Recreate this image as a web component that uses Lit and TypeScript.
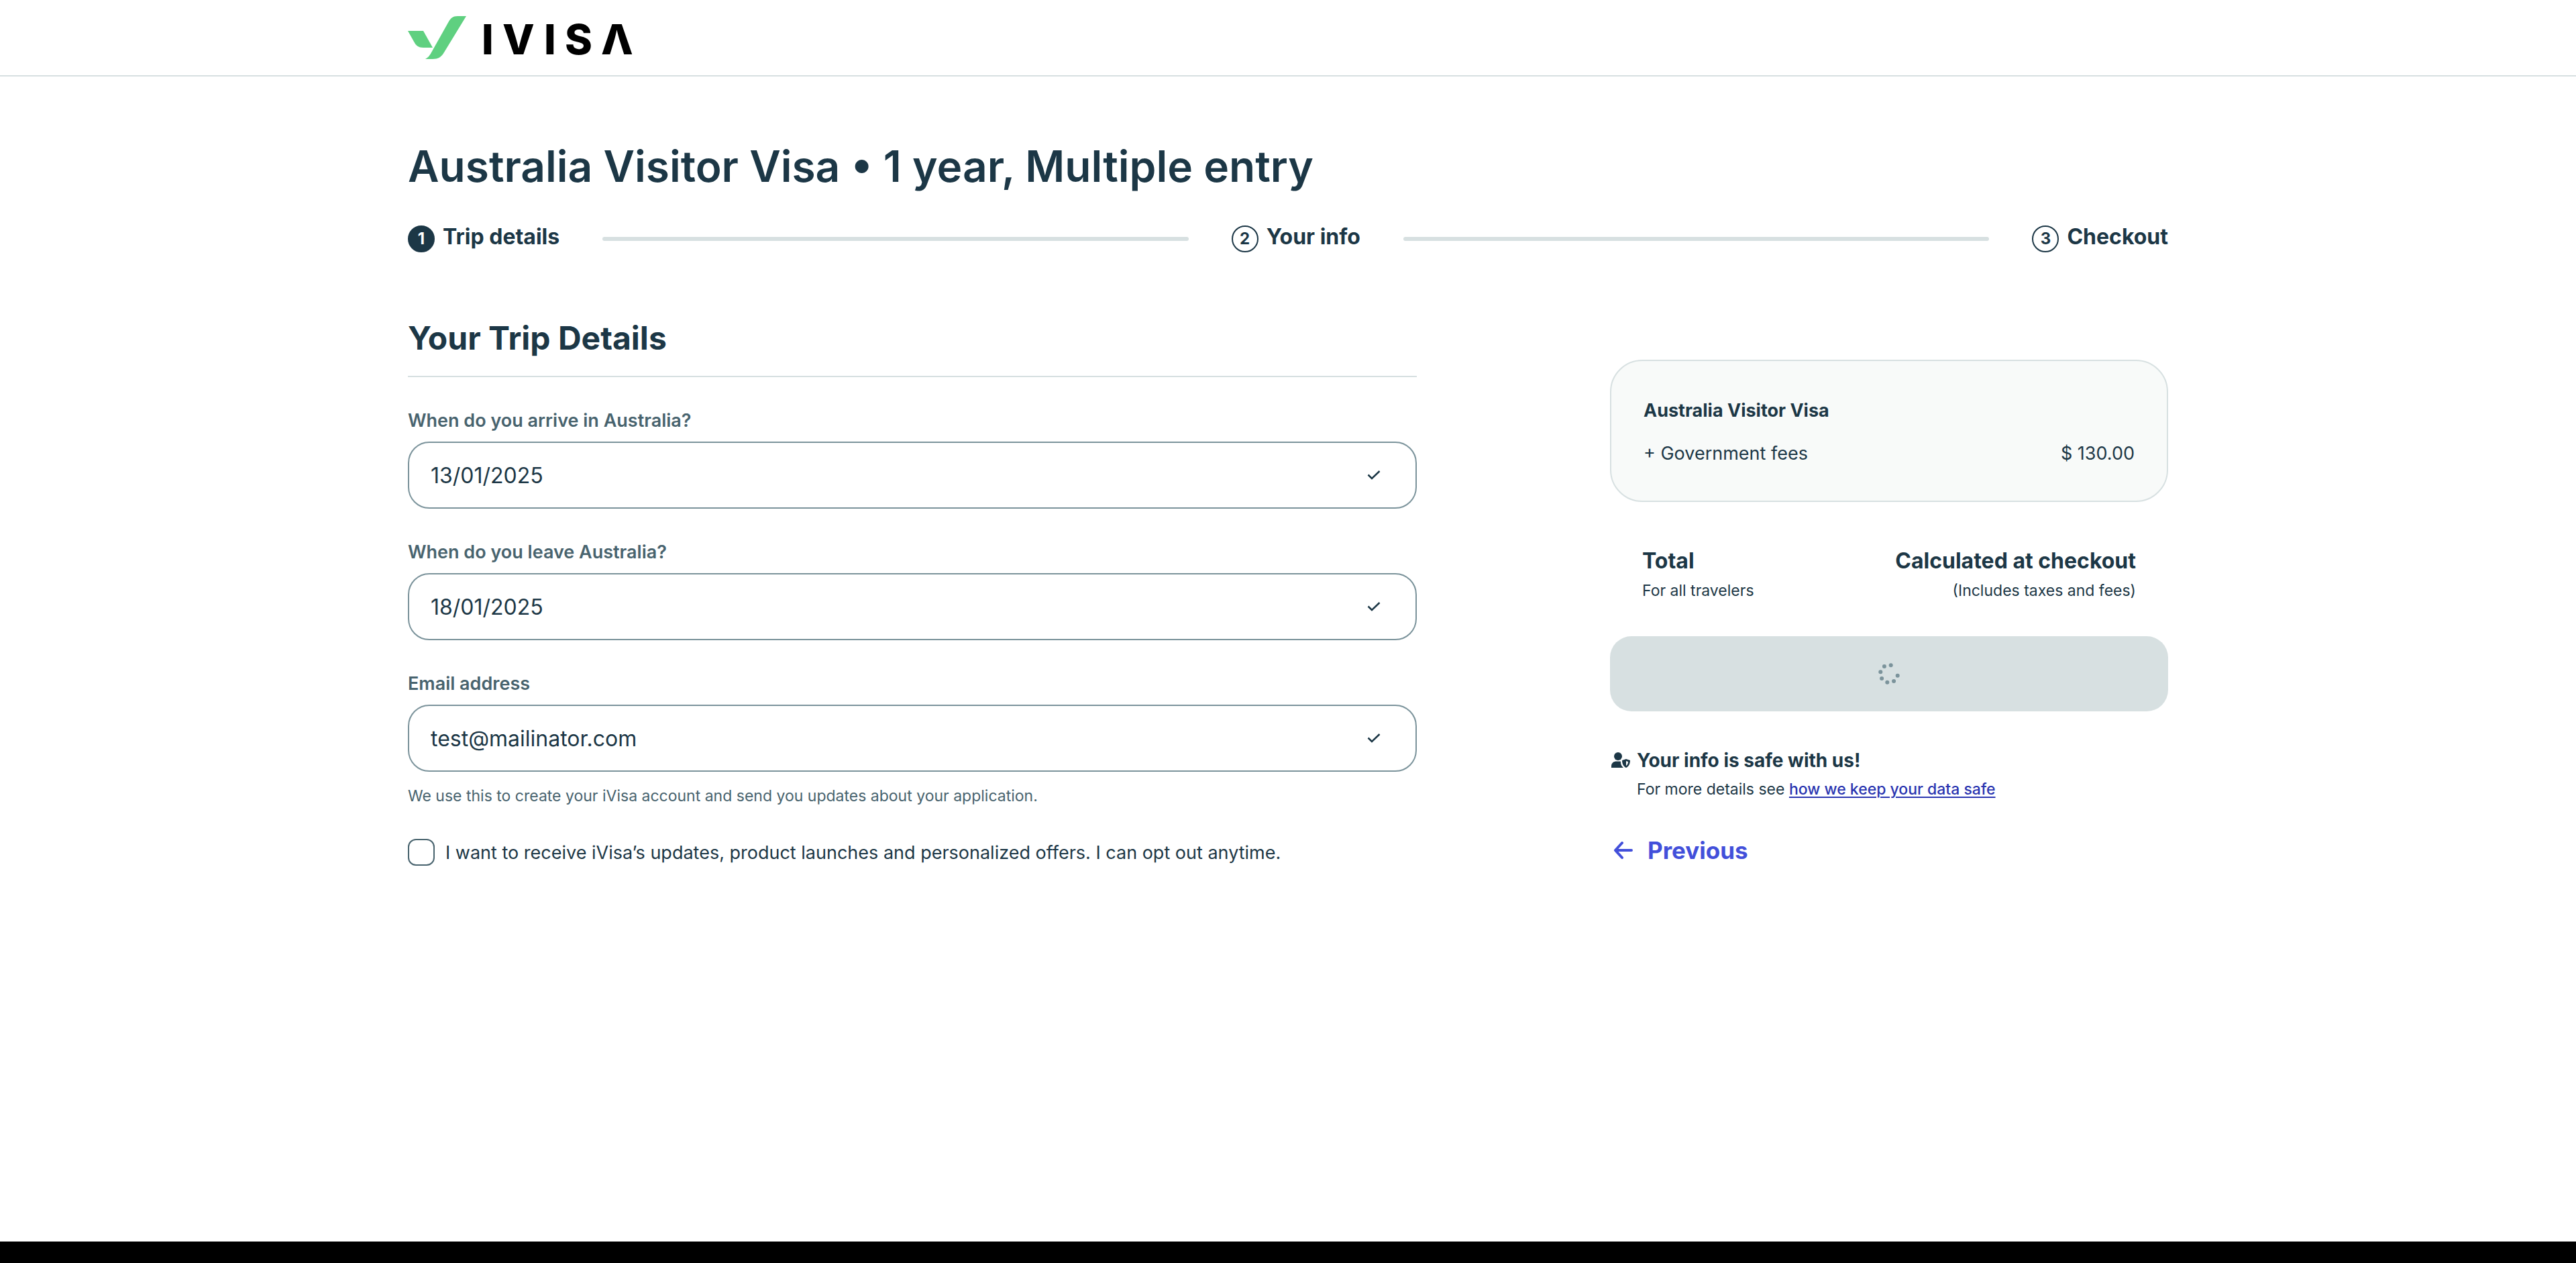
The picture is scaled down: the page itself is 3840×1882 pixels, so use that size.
import { LitElement, html, css, svg } from "lit";
import { customElement } from "lit/decorators.js";

const steps = ["Trip details", "Your info", "Checkout"];

const fields = [
  { id: "arrival", label: "When do you arrive in Australia?", value: "13/01/2025", type: "text" },
  { id: "departure", label: "When do you leave Australia?", value: "18/01/2025", type: "text" },
  { id: "email", label: "Email address", value: "test@mailinator.com", type: "email" },
];

const spinnerDots = [0, 1, 2, 3, 4, 5, 6].map((i) => {
  const angle = ((12 + i * 45) * Math.PI) / 180;
  return { x: 16 + 13 * Math.cos(angle), y: 16 + 13 * Math.sin(angle) };
});

@customElement("app-root")
export class AppRoot extends LitElement {
  static styles = css`
    :host {
      display: flex;
      flex-direction: column;
      min-height: 100vh;
      background: #fff;
      color: #1c3746;
      font-family: Inter, "Liberation Sans", sans-serif;
      font-size: 27px;
    }
    *, *::before, *::after { box-sizing: border-box; }
    h1, h2, p, ol { margin: 0; padding: 0; }
    svg { display: block; flex: none; overflow: visible; }
    .wrap { width: 100%; max-width: 2688px; margin: 0 auto; padding: 0 32px; }
    .header { border-bottom: 2px solid #d7e0e1; }
    .header .wrap { display: flex; align-items: center; height: 112px; }
    .wordmark { font-size: 62px; font-weight: 800; fill: #000; }
    .main { flex: 1; padding-top: 94px; padding-bottom: 64px; }
    .title { font-size: 64px; line-height: 80px; font-weight: 600; margin-bottom: 48px; }
    .steps { display: flex; gap: 64px; list-style: none; margin-bottom: 98px; }
    .step { display: flex; flex: none; gap: 12px; font-size: 32px; line-height: 34px; font-weight: 700; }
    .num {
      display: flex; align-items: center; justify-content: center;
      width: 40px; height: 40px; border: 2px solid #1c3746; border-radius: 50%;
      font-size: 24px; font-weight: 700;
    }
    .num.on { background: #1c3746; color: #fff; }
    .bar { flex: 1; align-self: center; height: 6px; border-radius: 3px; background: #d7e0e1; }
    .columns { display: grid; grid-template-columns: 47fr 26fr; column-gap: 288px; align-items: start; }
    .section-title {
      font-size: 48px; line-height: 60px; font-weight: 700;
      padding-bottom: 26px; border-bottom: 2px solid #d7e0e1; margin-bottom: 48px;
    }
    .field { margin-bottom: 48px; }
    .label { display: block; line-height: 34px; margin-bottom: 14px; color: #48636e; font-weight: 600; }
    .box {
      display: flex; align-items: center; height: 100px; padding: 0 48px 0 32px;
      border: 2px solid #7b939b; border-radius: 32px;
    }
    .input {
      flex: 1; min-width: 0; height: 48px; padding: 0; border: 0; outline: 0; background: none;
      font: inherit; font-size: 32px; color: inherit;
    }
    .help { margin-top: 20px; font-size: 23px; line-height: 32px; color: #48636e; }
    .opt { display: flex; align-items: center; gap: 16px; }
    .tick {
      appearance: none; width: 40px; height: 40px; margin: 0; flex: none;
      border: 2px solid #48636e; border-radius: 12px; background: #fff;
    }
    .side { padding-top: 62px; }
    .card {
      padding: 54px 48px 50px; border: 2px solid #d7e0e1; border-radius: 48px; background: #f8faf9;
      display: flex; flex-direction: column; gap: 24px; line-height: 40px;
    }
    .row { display: flex; justify-content: space-between; }
    .strong { font-weight: 700; }
    .totals { padding: 68px 48px 52px; display: flex; flex-direction: column; gap: 8px; }
    .total { font-size: 32px; line-height: 40px; font-weight: 700; }
    .small { font-size: 23px; line-height: 32px; }
    .pay {
      display: flex; align-items: center; justify-content: center; width: 100%; height: 112px;
      border: 0; border-radius: 32px; background: #d7e0e1;
    }
    .safe { display: grid; grid-template-columns: 32px 1fr; column-gap: 8px; row-gap: 10px; margin-top: 56px; }
    .safe .strong { font-size: 28px; line-height: 34px; }
    .safe .small { grid-column: 2; }
    .link { color: #2a35b0; font-weight: 500; text-underline-offset: 3px; text-decoration-thickness: 2px; }
    .prev {
      display: flex; align-items: center; gap: 16px; margin-top: 53px; padding: 0; border: 0; background: none;
      font: inherit; font-size: 35px; line-height: 44px; font-weight: 700; color: #424fda;
    }
    .footer { height: 32px; background: #000; }
  `;

  render() {
    return html`
      <header class="header">
        <div class="wrap">
          <svg width="352" height="64" viewBox="0 0 352 64" role="img" aria-label="iVisa">
            <path fill="#5fd080" d="M0 22H23L37 47H23C16 47 12 44 9 38Z" />
            <path fill="#5fd080" d="M87 0L54 54C50 61 45 64 37 64H26C30 62 32 59 34 56L61 8C64 3 67 0 74 0Z" />
            <text class="wordmark" x="110 141 203 234 288" y="57">IVISΛ</text>
          </svg>
        </div>
      </header>
      <main class="main">
        <div class="wrap">
          <h1 class="title">Australia Visitor Visa • 1 year, Multiple entry</h1>
          <ol class="steps">
            ${steps.map(
              (name, i) => html`
                <li class="step">
                  <span class="num ${i === 0 ? "on" : ""}">${i + 1}</span>${name}
                </li>
                ${i < steps.length - 1 ? html`<li class="bar" role="presentation"></li>` : ""}
              `
            )}
          </ol>
          <div class="columns">
            <form>
              <h2 class="section-title">Your Trip Details</h2>
              ${fields.map(
                (f) => html`
                  <div class="field">
                    <label class="label" for=${f.id}>${f.label}</label>
                    <div class="box">
                      <input class="input" id=${f.id} type=${f.type} .value=${f.value} />
                      <svg width="32" height="32" viewBox="0 0 32 32" fill="none" stroke="#1c3746" stroke-width="2.5">
                        <path d="M9.5 15.5L15 21L26.5 10" />
                      </svg>
                    </div>
                    ${f.id === "email"
                      ? html`<p class="help">We use this to create your iVisa account and send you updates about your application.</p>`
                      : ""}
                  </div>
                `
              )}
              <div class="opt">
                <input class="tick" type="checkbox" id="updates" />
                <label for="updates">I want to receive iVisa’s updates, product launches and personalized offers. I can opt out anytime.</label>
              </div>
            </form>
            <aside class="side">
              <div class="card">
                <div class="strong">Australia Visitor Visa</div>
                <div class="row"><span>+ Government fees</span><span>$ 130.00</span></div>
              </div>
              <div class="totals">
                <div class="row total"><span>Total</span><span>Calculated at checkout</span></div>
                <div class="row small"><span>For all travelers</span><span>(Includes taxes and fees)</span></div>
              </div>
              <button class="pay" type="button" disabled aria-label="Loading">
                <svg width="32" height="32" viewBox="0 0 32 32" fill="#7b939b">
                  ${spinnerDots.map((d) => svg`<circle cx=${d.x} cy=${d.y} r="3" />`)}
                </svg>
              </button>
              <div class="safe">
                <svg width="32" height="32" viewBox="0 0 32 32" fill="#1c3746">
                  <circle cx="12" cy="11" r="6" />
                  <path d="M2 28V26C2 21 5 18.5 10 18.5H15C16 18.5 16 19 16 20C16 24 18 26 20 28Z" />
                  <path fill-rule="evenodd" d="M24 15L30 17C30 22 28 26 24 28C20 26 18 22 18 17ZM24 18V25C26 24 27 21 27 19Z" />
                </svg>
                <p class="strong">Your info is safe with us!</p>
                <p class="small">For more details see <a class="link" href="#">how we keep your data safe</a></p>
              </div>
              <button class="prev" type="button">
                <svg width="40" height="40" viewBox="0 0 40 40" fill="none" stroke="#424fda" stroke-width="4" stroke-linecap="round" stroke-linejoin="round">
                  <path d="M32 20H8M18 9L8 20L18 31" />
                </svg>
                Previous
              </button>
            </aside>
          </div>
        </div>
      </main>
      <footer class="footer"></footer>
    `;
  }
}
